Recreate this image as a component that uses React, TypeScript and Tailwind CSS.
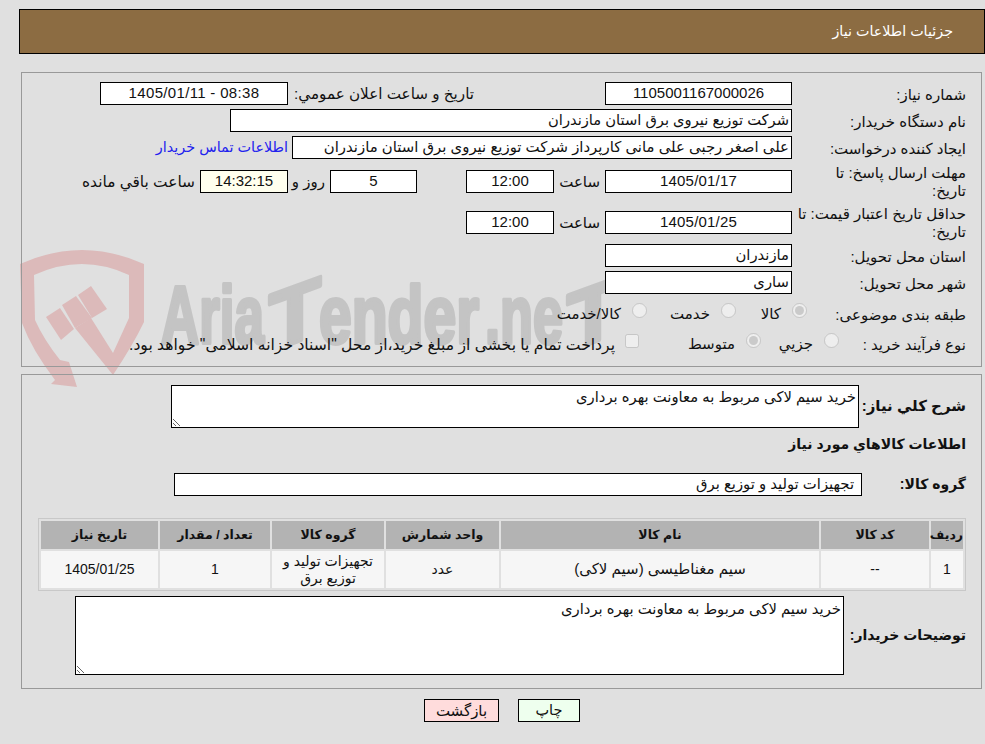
import React from 'react';

const font = "font-['Liberation_Sans','DejaVu_Sans',sans-serif]";

const Box = ({ className = '', children }: { className?: string; children?: React.ReactNode }) => (
  <div className={`border border-black bg-white flex items-center shrink-0 whitespace-nowrap overflow-hidden ${className}`}>{children}</div>
);

const Num = ({ children, className = 'text-[15px]' }: { children: React.ReactNode; className?: string }) => (
  <span className={className} dir="ltr">{children}</span>
);

const Label = ({ children, className = 'w-[174px]' }: { children: React.ReactNode; className?: string }) => (
  <div className={`shrink-0 text-[15px] leading-[18px] pt-[2px] whitespace-nowrap ${className}`}>{children}</div>
);

const Radio = ({ label, checked, className }: { label: string; checked?: boolean; className: string }) => (
  <label className={`flex items-center shrink-0 text-[15px] ${className}`}>
    <input type="radio" disabled defaultChecked={checked} className="w-[15px] h-[15px] m-0 -mt-[5px] ml-[11px]" />
    <span className="whitespace-nowrap pt-[3px]">{label}</span>
  </label>
);

const Watermark = () => (
  <svg className="absolute left-0 top-[240px] pointer-events-none" width="640" height="150" viewBox="0 240 640 150">
    <g fill="#dcbaba">
      <path d="M20 264 Q82 236 144 264 L144 322 Q133 345 113 375 L75 328 L91 318 L113 353 L129 318 L129 275 Q82 253 34 275 L35 320 Q44 340 60 360 L69 362 L77 387 L51 384 L55 380 Q32 350 22 323 Z" />
      <path d="M46 317 L60 308 L74 329 L61 340 Z" />
      <path d="M62 305 L76 296 L92 318 L75 328 Z" />
      <path d="M78 295 L91 286 L107 309 L92 318 Z" />
    </g>
    <g fill="#c4c4c4" stroke="#c4c4c4" strokeWidth="4" strokeLinejoin="round" fontFamily="'Liberation Sans', sans-serif" fontWeight="700" fontSize="82">
      <text x="161" y="343" textLength="103" lengthAdjust="spacingAndGlyphs" direction="ltr">Aria</text>
      <text transform="translate(269 352) skewY(-20)" textLength="52" lengthAdjust="spacingAndGlyphs" direction="ltr">T</text>
      <text x="319" y="343" textLength="160" lengthAdjust="spacingAndGlyphs" direction="ltr">ender</text>
      <text x="485" y="343" textLength="78" lengthAdjust="spacingAndGlyphs" direction="ltr">.ne</text>
      <text transform="translate(567 352) skewY(-20)" textLength="52" lengthAdjust="spacingAndGlyphs" direction="ltr">T</text>
    </g>
  </svg>
);

const columns = [
  { title: 'ردیف', w: 'w-[32px]' },
  { title: 'کد کالا', w: 'w-[108px]' },
  { title: 'نام کالا', w: 'w-[318px]' },
  { title: 'واحد شمارش', w: 'w-[113px]' },
  { title: 'گروه کالا', w: 'w-[112px]' },
  { title: 'تعداد / مقدار', w: 'w-[110px]' },
  { title: 'تاریخ نیاز', w: 'w-[117px]' },
];

const description = 'خرید سیم لاکی مربوط به معاونت بهره برداری';

export default function App() {
  return (
    <div dir="rtl" className={`relative w-[985px] h-[744px] overflow-hidden bg-[#e0e0e0] text-[#111] ${font}`}>
      <Watermark />
      <div className="relative flex flex-col items-start">
        {/* header */}
        <div className="mt-[9px] mr-0 w-[966px] h-[45px] border border-black bg-[#8c6c42] text-white text-[14.3px] flex items-center pr-[31px]">
          جزئیات اطلاعات نیاز
        </div>

        {/* main form */}
        <div className="mt-[18px] mr-[3px] w-[961px] h-[295px] border border-[#999999] pr-[15px] pt-[9px]">
          <div className="flex items-center h-[23px]">
            <Label>شماره نیاز:</Label>
            <Box className="w-[187px] h-[23px] justify-center"><Num>1105001167000026</Num></Box>
            <div className="w-[186px] ms-[131px] shrink-0 text-[15.2px] pt-[2px] whitespace-nowrap">تاریخ و ساعت اعلان عمومي:</div>
            <Box className="w-[188px] h-[23px] justify-center"><Num className="text-[15px] tracking-[0.33px]">1405/01/11 - 08:38</Num></Box>
          </div>
          <div className="flex items-center h-[23px] mt-[4px]">
            <Label>نام دستگاه خریدار:</Label>
            <Box className="w-[562px] h-[23px] pr-[2px] text-[14.7px]">شرکت توزیع نیروی برق استان مازندران</Box>
          </div>
          <div className="flex items-center h-[23px] mt-[4px]">
            <Label>ایجاد کننده درخواست:</Label>
            <Box className="w-[500px] h-[23px] pr-[2px] text-[14.9px]">علی اصغر رجبی علی مانی کارپرداز شرکت توزیع نیروی برق استان مازندران</Box>
            <a className="text-[#2222ee] text-[14.4px] mr-[4px] whitespace-nowrap">اطلاعات تماس خریدار</a>
          </div>
          <div className="flex items-center h-[36px] mt-[4px]">
            <Label>مهلت ارسال پاسخ: تا<br />تاریخ:</Label>
            <Box className="w-[187px] h-[23px] justify-center"><Num className="text-[15px] tracking-[0.2px]">1405/01/17</Num></Box>
            <div className="w-[51px] shrink-0 text-[15px] pr-[5px] pt-[2px]">ساعت</div>
            <Box className="w-[88px] h-[23px] justify-center"><Num>12:00</Num></Box>
            <div className="w-[49px] shrink-0" />
            <Box className="w-[87px] h-[23px] justify-center"><Num>5</Num></Box>
            <div className="w-[42px] shrink-0 text-[15px] pr-[5px] pt-[2px]">روز و</div>
            <Box className="w-[88px] h-[23px] justify-center !bg-[#ffffee]"><Num>14:32:15</Num></Box>
            <div className="shrink-0 text-[15.4px] pr-[5px] pt-[2px] whitespace-nowrap">ساعت باقي مانده</div>
          </div>
          <div className="flex items-center h-[36px] mt-[5px]">
            <Label>حداقل تاریخ اعتبار قیمت: تا<br />تاریخ:</Label>
            <Box className="w-[187px] h-[23px] justify-center"><Num className="text-[15px] tracking-[0.2px]">1405/01/25</Num></Box>
            <div className="w-[51px] shrink-0 text-[15px] pr-[5px] pt-[2px]">ساعت</div>
            <Box className="w-[88px] h-[23px] justify-center"><Num>12:00</Num></Box>
          </div>
          <div className="flex items-center h-[23px] mt-[4px]">
            <Label>استان محل تحویل:</Label>
            <Box className="w-[187px] h-[23px] pr-[2px] text-[14.8px]">مازندران</Box>
          </div>
          <div className="flex items-center h-[23px] mt-[4px]">
            <Label>شهر محل تحویل:</Label>
            <Box className="w-[187px] h-[23px] pr-[2px] text-[14.8px]">ساری</Box>
          </div>
          <div className="flex items-center h-[24px] mt-[7px]">
            <Label className="w-[159px] pt-[3px]">طبقه بندی موضوعی:</Label>
            <Radio label="کالا" checked className="w-[71px]" />
            <Radio label="خدمت" className="w-[89px]" />
            <Radio label="کالا/خدمت" className="w-[100px]" />
          </div>
          <div className="flex items-center h-[24px] mt-[6px]">
            <Label className="w-[127px] pt-[3px]">نوع فرآیند خرید :</Label>
            <Radio label="جزیي" className="w-[78px]" />
            <Radio label="متوسط" checked className="w-[122px]" />
            <label className="flex items-center text-[15.6px] whitespace-nowrap">
              <input type="checkbox" disabled className="w-[14px] h-[14px] m-0 -mt-[5px] ml-[10px]" />
              <span className="pt-[3px]">پرداخت تمام یا بخشی از مبلغ خرید،از محل "اسناد خزانه اسلامی" خواهد بود.</span>
            </label>
          </div>
        </div>

        {/* goods section */}
        <div className="mt-[7px] mr-[3px] w-[961px] h-[315px] border border-[#999999] pr-[15px] pt-[10px]">
          <div className="flex items-center h-[43px]">
            <div className="w-[107px] shrink-0 text-[15px] font-bold whitespace-nowrap">شرح كلي نياز:</div>
            <textarea readOnly defaultValue={description} className="w-[688px] h-[43px] border border-black bg-white text-[14.8px] leading-[20px] px-[2px] py-0 pt-[1px] outline-none" />
          </div>
          <div className="h-[30px] mt-[1px] text-[14px] font-bold flex items-center">اطلاعات كالاهاي مورد نياز</div>
          <div className="flex items-center h-[23px] mt-[14px]">
            <div className="w-[104px] shrink-0 text-[14px] font-bold whitespace-nowrap">گروه کالا:</div>
            <Box className="w-[688px] h-[23px] pr-[7px] text-[14.8px]">تجهیزات تولید و توزیع برق</Box>
          </div>
          <table className="mt-[22px] w-[928px] border border-[#c8c8c8] border-separate border-spacing-[2px] table-fixed text-[12.5px]">
            <thead>
              <tr>
                {columns.map((c) => (
                  <th key={c.title} className={`${c.w} h-[28px] bg-[#b3b3b3] font-bold p-0 whitespace-nowrap`}>{c.title}</th>
                ))}
              </tr>
            </thead>
            <tbody className="bg-[#f6f6f6] text-center text-[14px]">
              <tr>
                <td className="h-[37px] p-0"><Num className="text-[14px]">1</Num></td>
                <td className="p-0"><Num className="text-[14px]">--</Num></td>
                <td className="p-0 text-[15px]">سیم مغناطیسی (سیم لاکی)</td>
                <td className="p-0">عدد</td>
                <td className="p-0 leading-[17px]">تجهیزات تولید و<br />توزیع برق</td>
                <td className="p-0"><Num className="text-[14px]">1</Num></td>
                <td className="p-0"><Num className="text-[14px]">1405/01/25</Num></td>
              </tr>
            </tbody>
          </table>
          <div className="flex items-center h-[79px] mt-[5px]">
            <div className="w-[122px] shrink-0 text-[14px] font-bold whitespace-nowrap">توضیحات خریدار:</div>
            <textarea readOnly defaultValue={description} className="w-[769px] h-[79px] border border-black bg-white text-[14.8px] leading-[20px] px-[2px] py-0 pt-[2px] outline-none" />
          </div>
        </div>

        {/* actions */}
        <div className="mt-[10px] w-full flex gap-[19px] pr-[405px]">
          <button className="w-[62px] h-[23px] border border-black bg-[#eeffee] text-[14.5px]">چاپ</button>
          <button className="w-[75px] h-[23px] border border-black bg-[#ffdcdc] text-[15px]">بازگشت</button>
        </div>
      </div>
    </div>
  );
}
